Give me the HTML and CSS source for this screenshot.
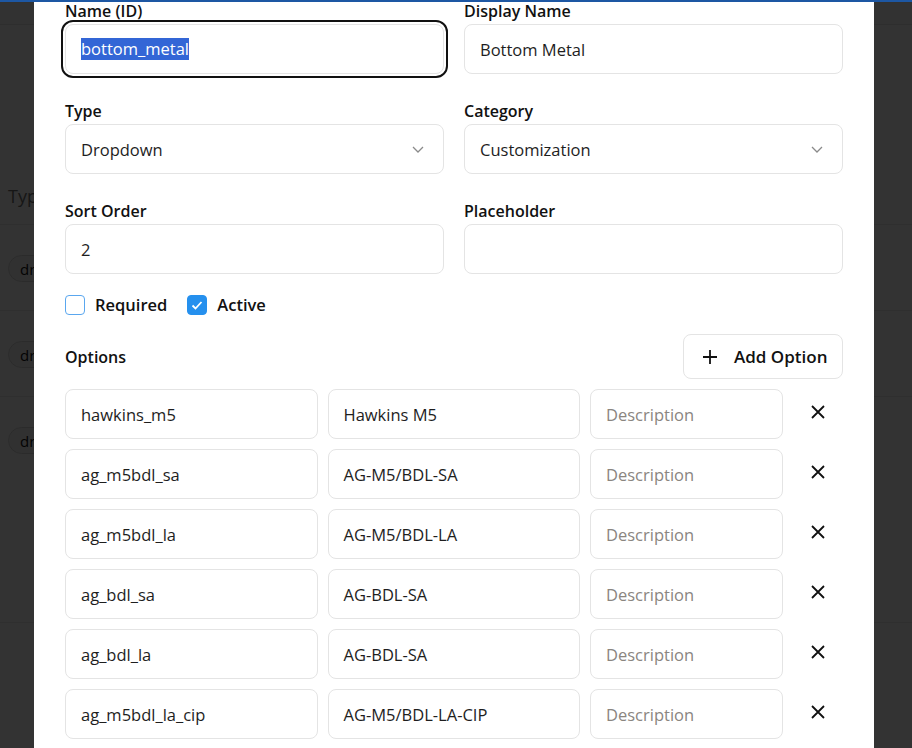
FILE: index.html
```html
<!DOCTYPE html>
<html lang="en">
<head>
<meta charset="utf-8">
<title>Edit Field</title>
<link rel="stylesheet" href="styles.css">
</head>
<body>
<div class="topline"></div>
<div class="page">
  <header class="app-header"></header>
  <div class="table">
    <div class="thead"><span>Type</span></div>
    <div class="trow"><span class="badge">dropdown</span></div>
    <div class="trow"><span class="badge">dropdown</span></div>
    <div class="trow tall"><span class="badge">dropdown</span></div>
  </div>
</div>
<div class="overlay"></div>
<div class="modal">
  <form class="form">
    <div class="grid2">
      <div class="field">
        <label>Name (ID)</label>
        <div class="input focused"><span class="sel">bottom_metal</span></div>
      </div>
      <div class="field">
        <label>Display Name</label>
        <div class="input">Bottom Metal</div>
      </div>
      <div class="field">
        <label>Type</label>
        <div class="input select"><span>Dropdown</span>
          <svg class="chev" viewBox="0 0 12 7"><path d="M1 1l5 5 5-5"/></svg></div>
      </div>
      <div class="field">
        <label>Category</label>
        <div class="input select"><span>Customization</span>
          <svg class="chev" viewBox="0 0 12 7"><path d="M1 1l5 5 5-5"/></svg></div>
      </div>
      <div class="field">
        <label>Sort Order</label>
        <div class="input">2</div>
      </div>
      <div class="field">
        <label>Placeholder</label>
        <div class="input"></div>
      </div>
    </div>

    <div class="checks">
      <div class="check"><span class="box"></span><span>Required</span></div>
      <div class="check"><span class="box on"><svg viewBox="0 0 20 20"><path d="M5.5 10.5l3 3 6-6.5"/></svg></span><span>Active</span></div>
    </div>

    <div class="options-head">
      <span class="options-title">Options</span>
      <div class="add-btn"><svg class="plus" viewBox="0 0 14 14"><path d="M7 0v14M0 7h14"/></svg><span>Add Option</span></div>
    </div>

    <div class="opt-list">
      <div class="opt-row">
        <div class="input">hawkins_m5</div>
        <div class="input">Hawkins M5</div>
        <div class="input ph">Description</div>
        <div class="remove"><svg viewBox="0 0 14 14"><path d="M1 1l12 12M13 1L1 13"/></svg></div>
      </div>
      <div class="opt-row">
        <div class="input">ag_m5bdl_sa</div>
        <div class="input">AG-M5/BDL-SA</div>
        <div class="input ph">Description</div>
        <div class="remove"><svg viewBox="0 0 14 14"><path d="M1 1l12 12M13 1L1 13"/></svg></div>
      </div>
      <div class="opt-row">
        <div class="input">ag_m5bdl_la</div>
        <div class="input">AG-M5/BDL-LA</div>
        <div class="input ph">Description</div>
        <div class="remove"><svg viewBox="0 0 14 14"><path d="M1 1l12 12M13 1L1 13"/></svg></div>
      </div>
      <div class="opt-row">
        <div class="input">ag_bdl_sa</div>
        <div class="input">AG-BDL-SA</div>
        <div class="input ph">Description</div>
        <div class="remove"><svg viewBox="0 0 14 14"><path d="M1 1l12 12M13 1L1 13"/></svg></div>
      </div>
      <div class="opt-row">
        <div class="input">ag_bdl_la</div>
        <div class="input">AG-BDL-SA</div>
        <div class="input ph">Description</div>
        <div class="remove"><svg viewBox="0 0 14 14"><path d="M1 1l12 12M13 1L1 13"/></svg></div>
      </div>
      <div class="opt-row">
        <div class="input">ag_m5bdl_la_cip</div>
        <div class="input">AG-M5/BDL-LA-CIP</div>
        <div class="input ph">Description</div>
        <div class="remove"><svg viewBox="0 0 14 14"><path d="M1 1l12 12M13 1L1 13"/></svg></div>
      </div>
    </div>
  </form>
</div>
</body>
</html>
```

FILE: styles.css
```css
* { box-sizing: border-box; }
html, body { margin: 0; height: 100%; overflow: hidden; }
body {
  font-family: "Open Sans", "Noto Sans", sans-serif;
  background: #fff;
  color: #111;
}
.topline {
  position: fixed; top: 0; left: 0; right: 0; height: 2px;
  background: #1d57a3; z-index: 10;
}
.app-header { height: 25px; border-bottom: 1px solid #e4e4e4; background: #fbfbfb; }
.table { margin-top: 135px; }
.thead {
  height: 65px; display: flex; align-items: center; padding: 8px 8px 0;
  border-bottom: 1px solid #ececec; font-size: 18px; color: #707070;
}
.trow { height: 86px; padding: 30px 8px 0; border-bottom: 1px solid #ececec; white-space: nowrap; }
.trow.tall { height: 226px; }
.badge {
  display: inline-flex; align-items: center; height: 27px; padding: 0 11px;
  border: 1px solid #d8d8d8; border-radius: 14px; font-size: 15px; color: #111;
  background: #f6f6f6;
}
.overlay { position: fixed; inset: 0; background: rgba(0,0,0,.8); }
.modal {
  position: absolute; left: 34px; top: -24px; width: 840px;
  background: #fff; padding: 24px 31px 24px;
}
.grid2 { display: grid; grid-template-columns: 1fr 1fr; column-gap: 20px; row-gap: 26px; }
.field label {
  display: block; font-size: 16px; font-weight: 600; line-height: 22px;
  margin-bottom: 2px; color: #111;
}
.input {
  height: 50px; border: 1px solid #e4e4e4; border-radius: 8px;
  display: flex; align-items: center; padding: 0 15px;
  font-size: 16.5px; color: #1e1e1e; background: #fff; white-space: nowrap;
}
.input.focused { outline: 2px solid #111; outline-offset: 2px; }
.sel { background: #3366d6; color: #fff; line-height: 22px; }
.select { justify-content: space-between; padding-right: 19px; }
.chev { width: 12px; height: 7px; fill: none; stroke: #8a8a8a; stroke-width: 1.3; }
.ph { color: #8a8580; }

.checks { display: flex; gap: 20px; margin-top: 20px; height: 22px; align-items: center; }
.check { display: flex; align-items: center; gap: 10px; font-size: 16.5px; font-weight: 600; line-height: 22px; }
.box {
  width: 20px; height: 20px; border: 1.5px solid #5aa7ef; border-radius: 4px;
  display: flex; align-items: center; justify-content: center; background: #fff;
}
.box.on { background: #2590ee; border-color: #2590ee; }
.box svg { width: 20px; height: 20px; fill: none; stroke: #fff; stroke-width: 1.8; flex: none; }

.options-head { display: flex; justify-content: space-between; align-items: center; margin-top: 18px; }
.options-title { font-size: 16px; font-weight: 600; }
.add-btn {
  width: 160px; height: 45px; border: 1px solid #e4e4e4; border-radius: 8px;
  display: flex; align-items: center; gap: 17px; padding-left: 19px;
  font-size: 17px; font-weight: 600; color: #111;
}
.plus { width: 14px; height: 14px; fill: none; stroke: #111; stroke-width: 1.8; }

.opt-list { display: flex; flex-direction: column; gap: 10px; margin-top: 10px; }
.opt-row { display: grid; grid-template-columns: 1fr 1fr 193px 50px; gap: 10px; }
.remove { height: 45px; display: flex; align-items: center; justify-content: center; }
.remove svg { width: 14px; height: 14px; fill: none; stroke: #111; stroke-width: 1.8; }
```
